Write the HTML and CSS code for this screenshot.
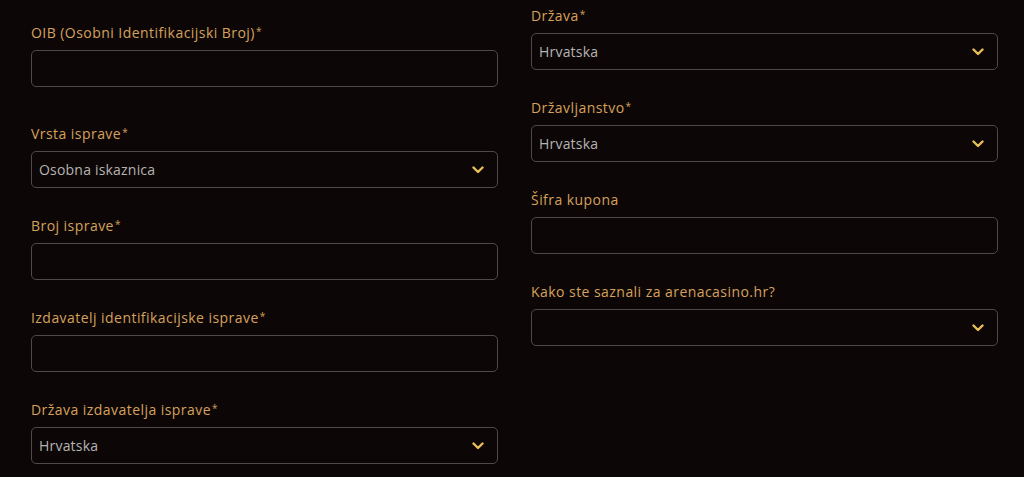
FILE: index.html
```html
<!DOCTYPE html>
<html lang="hr">
<head>
<meta charset="utf-8">
<title>Registracija</title>
<link rel="stylesheet" href="styles.css">
</head>
<body>
<form class="form">
  <div class="col col-left">
    <div class="field field-first">
      <label class="label">OIB (Osobni Identifikacijski Broj)<span class="req">*</span></label>
      <div class="box"></div>
    </div>
    <div class="field">
      <label class="label">Vrsta isprave<span class="req">*</span></label>
      <div class="box select"><span class="value">Osobna iskaznica</span>
        <svg class="chev" width="12" height="8" viewBox="0 0 12 8"><path d="M1.5 1.5 L6 6 L10.5 1.5" fill="none" stroke="#e8bf57" stroke-width="2.4" stroke-linecap="round" stroke-linejoin="round"/></svg>
      </div>
    </div>
    <div class="field">
      <label class="label">Broj isprave<span class="req">*</span></label>
      <div class="box"></div>
    </div>
    <div class="field">
      <label class="label">Izdavatelj identifikacijske isprave<span class="req">*</span></label>
      <div class="box"></div>
    </div>
    <div class="field">
      <label class="label">Država izdavatelja isprave<span class="req">*</span></label>
      <div class="box select"><span class="value">Hrvatska</span>
        <svg class="chev" width="12" height="8" viewBox="0 0 12 8"><path d="M1.5 1.5 L6 6 L10.5 1.5" fill="none" stroke="#e8bf57" stroke-width="2.4" stroke-linecap="round" stroke-linejoin="round"/></svg>
      </div>
    </div>
  </div>
  <div class="col col-right">
    <div class="field">
      <label class="label">Država<span class="req">*</span></label>
      <div class="box select"><span class="value">Hrvatska</span>
        <svg class="chev" width="12" height="8" viewBox="0 0 12 8"><path d="M1.5 1.5 L6 6 L10.5 1.5" fill="none" stroke="#e8bf57" stroke-width="2.4" stroke-linecap="round" stroke-linejoin="round"/></svg>
      </div>
    </div>
    <div class="field">
      <label class="label">Državljanstvo<span class="req">*</span></label>
      <div class="box select"><span class="value">Hrvatska</span>
        <svg class="chev" width="12" height="8" viewBox="0 0 12 8"><path d="M1.5 1.5 L6 6 L10.5 1.5" fill="none" stroke="#e8bf57" stroke-width="2.4" stroke-linecap="round" stroke-linejoin="round"/></svg>
      </div>
    </div>
    <div class="field">
      <label class="label">Šifra kupona</label>
      <div class="box"></div>
    </div>
    <div class="field">
      <label class="label">Kako ste saznali za arenacasino.hr?</label>
      <div class="box select"><span class="value"></span>
        <svg class="chev" width="12" height="8" viewBox="0 0 12 8"><path d="M1.5 1.5 L6 6 L10.5 1.5" fill="none" stroke="#e8bf57" stroke-width="2.4" stroke-linecap="round" stroke-linejoin="round"/></svg>
      </div>
    </div>
  </div>
</form>
</body>
</html>
```

FILE: styles.css
```css
html, body {
  margin: 0;
  padding: 0;
  background: #0c0706;
  height: 100%;
  overflow: hidden;
}

body {
  font-family: "Open Sans", "Noto Sans", sans-serif;
  font-size: 14px;
}

.form {
  display: grid;
  grid-template-columns: 467px 467px;
  column-gap: 33px;
  padding-left: 31px;
}

.col {
  display: flex;
  flex-direction: column;
}

.col-left {
  padding-top: 24px;
}

.col-right {
  padding-top: 7px;
}

.field {
  display: flex;
  flex-direction: column;
  margin-bottom: 29px;
}

.field-first {
  margin-bottom: 38px;
}

.label {
  display: block;
  height: 18px;
  color: #d6a15d;
  line-height: 18px;
  margin-bottom: 8px;
  letter-spacing: 0.45px;
}

.req {
  font-size: 10px;
  line-height: 0;
  position: relative;
  top: -3px;
  margin-left: 1px;
}

.box {
  box-sizing: border-box;
  height: 37px;
  border: 1px solid #504a47;
  border-radius: 5px;
  background: #0c0706;
  display: flex;
  align-items: center;
  padding: 0 13px 0 7px;
}

.value {
  flex: 1;
  color: #b6b3b3;
  letter-spacing: 0.2px;
}

.chev {
  display: block;
}
```
